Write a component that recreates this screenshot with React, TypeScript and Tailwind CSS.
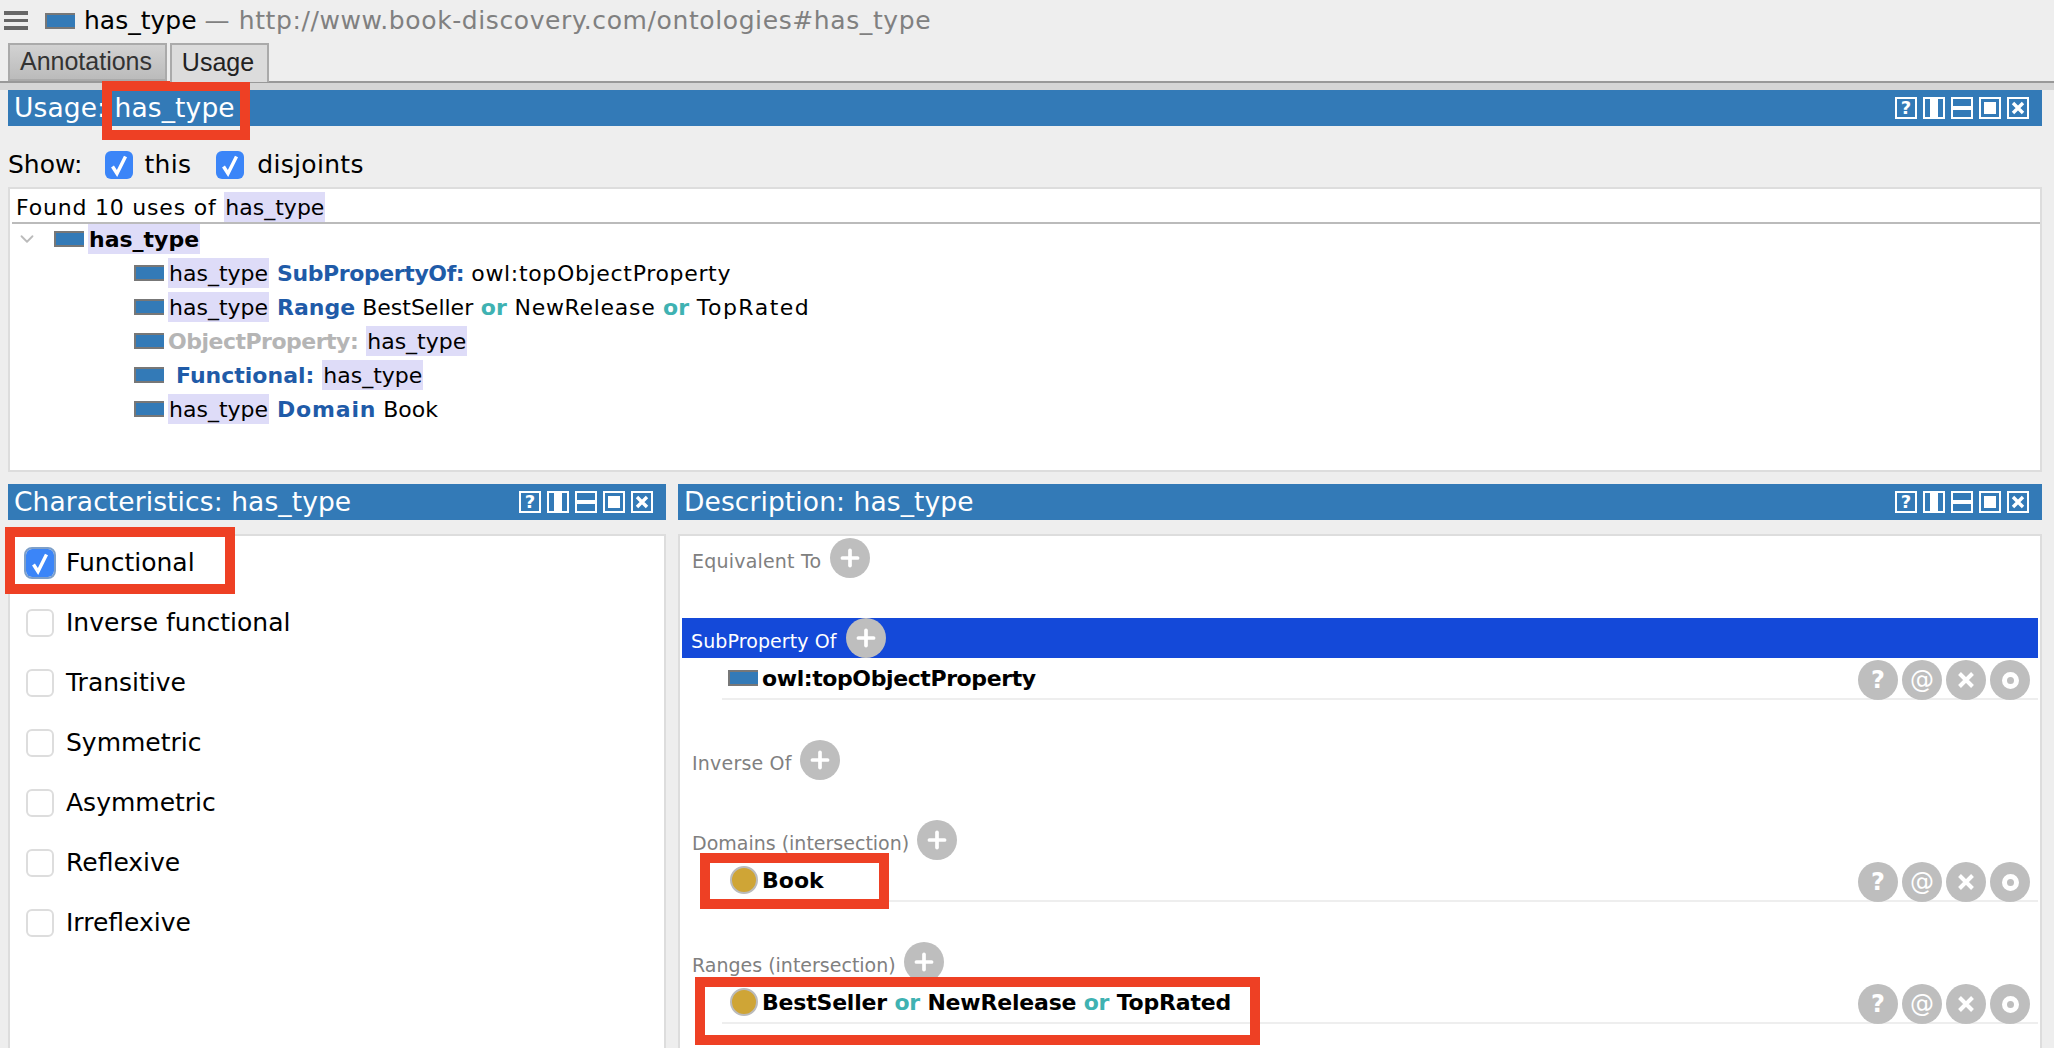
import { ChevronDown, Plus } from "lucide-react";
import type { ReactNode } from "react";

const sans = "font-['DejaVu_Sans',sans-serif]";

// the property glyph used all over the page
const PropIcon = ({ className = "" }: { className?: string }) => (
  <span className={`inline-block h-4 w-[30px] shrink-0 border-y-2 border-l-2 border-[#777] bg-[#337ab7] ${className}`} />
);

const ClassDot = () => (
  <span className="inline-block h-7 w-7 shrink-0 rounded-full border-2 border-[#bbb] bg-[#cfa536]" />
);

const Name = ({ children, bold = false }: { children: ReactNode; bold?: boolean }) => (
  <span className={`inline-flex h-[30px] items-center bg-[#dedcf8] px-[1px] text-black ${bold ? "font-bold" : ""}`}>{children}</span>
);

const Kw = ({ children, className = "" }: { children: ReactNode; className?: string }) => (
  <span className={`font-bold text-[#1f5ba8] ${className}`}>{children}</span>
);
const Or = ({ bold = true }: { bold?: boolean }) => <span className={`text-[#3fb2b2] ${bold ? "font-bold" : ""}`}> or </span>;

const HeaderButtons = () => (
  <div className="flex gap-[6px]">
    <span className="flex h-[22px] w-[22px] items-center justify-center border-2 border-white text-[18px] leading-none font-bold text-white">?</span>
    <span className="flex h-[22px] w-[22px] justify-center border-2 border-white"><span className="h-full w-2 bg-white" /></span>
    <span className="flex h-[22px] w-[22px] items-center border-2 border-white"><span className="h-1 w-full bg-white" /></span>
    <span className="flex h-[22px] w-[22px] items-center justify-center border-2 border-white"><span className="h-3 w-3 bg-white" /></span>
    <span className="flex h-[22px] w-[22px] items-center justify-center border-2 border-white">
      <svg width="14" height="14" viewBox="0 0 14 14"><path d="M2 2l10 10M12 2L2 12" stroke="#fff" strokeWidth="3.4" /></svg>
    </span>
  </div>
);

const ViewHeader = ({ title }: { title: string }) => (
  <div className="flex h-9 items-center justify-between bg-[#337ab7] pr-[13px] pl-[6px]">
    <span className="text-[26.5px] tracking-[0.1px] whitespace-nowrap text-white">{title}</span>
    <HeaderButtons />
  </div>
);

const CheckOn = ({ ring = false }: { ring?: boolean }) => (
  <span className={`flex h-7 w-7 shrink-0 items-center justify-center rounded-[6px] bg-[#3b85f8] ${ring ? "outline-2 outline-[#7d9fc9]" : ""}`}>
    <svg width="20" height="24" viewBox="0 0 20 24" fill="none">
      <path d="M3.500 13.500L8 20.500L16.500 3.500" stroke="#fff" strokeWidth="3.400" />
    </svg>
  </span>
);

const AddButton = () => (
  <span className="flex h-10 w-10 shrink-0 items-center justify-center rounded-full bg-[#bebebe]">
    <Plus size={26} strokeWidth={3.4} className="text-white" />
  </span>
);

const Circle = ({ children }: { children: ReactNode }) => (
  <span className="flex h-10 w-10 items-center justify-center rounded-full bg-[#bebebe] text-[24px] leading-none text-white">{children}</span>
);

const RowActions = () => (
  <div className="flex gap-1">
    <Circle><span className="font-bold">?</span></Circle>
    <Circle>@</Circle>
    <Circle>
      <svg width="18" height="18" viewBox="0 0 18 18"><path d="M2.500 2.500l13 13M15.500 2.500l-13 13" stroke="#fff" strokeWidth="4" /></svg>
    </Circle>
    <Circle><span className="h-[17px] w-[17px] rounded-full border-[5px] border-white" /></Circle>
  </div>
);

const FrameRow = ({ children }: { children: ReactNode }) => (
  <div className="ml-[40px] flex h-[42px] justify-between border-b-2 border-[#eee]">
    <div className="flex items-center gap-1 pl-2 text-[22px] font-bold text-black">{children}</div>
    <div className="-mb-[2px] self-end pr-2"><RowActions /></div>
  </div>
);

const SectionLabel = ({ children, className = "" }: { children: ReactNode; className?: string }) => (
  <div className={`flex h-10 items-center pl-[10px] text-[19px] whitespace-nowrap text-[#808080] ${className}`}>
    <span className="pt-[6px]">{children}</span>
    <AddButton />
  </div>
);

const characteristics = ["Inverse functional", "Transitive", "Symmetric", "Asymmetric", "Reflexive", "Irreflexive"];

const Callout = ({ className }: { className: string }) => (
  <div className={`absolute border-[10px] border-[#ee4024] ${className}`} />
);

export default function App() {
  return (
    <div className={`relative h-[1048px] w-[2054px] overflow-hidden bg-[#eeeeee] text-black ${sans}`}>
      {/* Title */}
      <div className="flex h-[43px] items-center pb-[2px] pl-1 text-[25px] whitespace-nowrap">
        <span className="flex h-[19px] w-6 flex-col justify-between">
          <span className="h-1 bg-[#666]" />
          <span className="h-[3px] bg-[#666]" />
          <span className="h-1 bg-[#666]" />
        </span>
        <PropIcon className="ml-[17px]" />
        <span className="ml-[9px]">has_type</span>
        <span className="ml-[8px] tracking-[0.6px] text-[#808080]">— http://www.book-discovery.com/ontologies#has_type</span>
      </div>

      {/* Tabs */}
      <div className="flex h-[38px] gap-[3px] pl-2 font-['Liberation_Sans',sans-serif] text-[25px]">
        <div className="flex w-[159px] items-center justify-center border-2 border-[#aaa] bg-gradient-to-b from-[#d2d2d2] to-[#bbbbbb] pr-[3px] text-[#333]">Annotations</div>
        <div className="z-10 flex h-[39px] w-[99px] items-center justify-center border-x-2 border-t-2 border-[#aaa] bg-[#dcdcdc] pr-[3px] pb-[2px] text-[#222]">Usage</div>
      </div>
      <div className="h-[9px] border-t-2 border-[#999] bg-[#d6d6d6]" />

      <div className="pr-3 pl-2">
        {/* Usage view */}
        <ViewHeader title="Usage: has_type" />
        <div className="flex h-[61px] items-center pt-4 text-[25px]">
          <span>Show:</span>
          <span className="ml-[22px]"><CheckOn /></span>
          <span className="ml-[12px] tracking-[0.3px]">this</span>
          <span className="ml-[25px]"><CheckOn /></span>
          <span className="ml-[13px] tracking-[0.3px]">disjoints</span>
        </div>
        <div className="h-[285px] border-2 border-[#ddd] bg-white text-[22px] whitespace-nowrap">
          <div className="ml-[2px] flex h-[35px] items-end border-b-2 border-[#bbb] pl-1">
            <span className="flex h-[30px] items-center tracking-[0.8px]">Found 10 uses of&nbsp;</span>
            <Name>has_type</Name>
          </div>
          <div className="flex h-[30px] items-center">
            <ChevronDown size={22} className="ml-[6px] text-[#bbb]" />
            <PropIcon className="ml-[16px]" />
            <span className="ml-1"><Name bold>has_type</Name></span>
          </div>
          <div className="mt-1 flex flex-col gap-1 pl-[124px]">
            <div className="flex h-[30px] items-center">
              <PropIcon className="mr-1" />
              <Name>has_type</Name>
              <span className="ml-2">
                <Kw className="tracking-[-0.4px]">SubPropertyOf:</Kw> <span className="tracking-[0.67px]">owl:topObjectProperty</span>
              </span>
            </div>
            <div className="flex h-[30px] items-center">
              <PropIcon className="mr-1" />
              <Name>has_type</Name>
              <span className="ml-2 whitespace-pre">
                <Kw>Range</Kw> BestSeller<Or /><span className="tracking-[0.7px]">NewRelease</span><Or /><span className="tracking-[1.5px]">TopRated</span>
              </span>
            </div>
            <div className="flex h-[30px] items-center">
              <PropIcon className="mr-1" />
              <span className="font-bold tracking-[-0.5px] text-[#b5b5b5]">ObjectProperty:</span>
              <span className="ml-2"><Name>has_type</Name></span>
            </div>
            <div className="flex h-[30px] items-center">
              <PropIcon className="mr-[12px]" />
              <Kw>Functional:</Kw>
              <span className="ml-2"><Name>has_type</Name></span>
            </div>
            <div className="flex h-[30px] items-center">
              <PropIcon className="mr-1" />
              <Name>has_type</Name>
              <span className="ml-2"><Kw className="tracking-[0.8px]">Domain</Kw> Book</span>
            </div>
          </div>
        </div>

        {/* Lower views */}
        <div className="mt-3 grid grid-cols-[658px_1fr] gap-3">
          <div>
            <ViewHeader title="Characteristics: has_type" />
            <div className="mt-[14px] h-[520px] border-2 border-[#ddd] bg-white pt-3 pl-[16px] text-[25px]">
              <div className="flex h-[30px] items-center gap-3">
                <CheckOn ring />
                <span>Functional</span>
              </div>
              {characteristics.map((name) => (
                <div key={name} className="mt-[30px] flex h-[30px] items-center gap-3">
                  <span className="h-7 w-7 shrink-0 rounded-[6px] border-2 border-[#ddd] bg-white" />
                  <span>{name}</span>
                </div>
              ))}
            </div>
          </div>

          <div>
            <ViewHeader title="Description: has_type" />
            <div className="mt-[14px] h-[520px] border-2 border-[#ddd] bg-white px-[2px]">
              <div className="pt-[2px]"><SectionLabel className="gap-[9px] tracking-[0.2px]">Equivalent To</SectionLabel></div>
              <div className="mt-10 bg-[#1449d9]">
                <div className="flex h-10 items-center gap-[9px] pl-[9px] text-[19px] tracking-[0.1px] text-white">
                  <span className="pt-[6px]">SubProperty Of</span>
                  <AddButton />
                </div>
              </div>
              <FrameRow><PropIcon className="-ml-[2px]" /><span className="tracking-[-0.4px]">owl:topObjectProperty</span></FrameRow>
              <div className="mt-10"><SectionLabel className="gap-2 tracking-[0.2px]">Inverse Of</SectionLabel></div>
              <div className="mt-10"><SectionLabel className="gap-2">Domains (intersection)</SectionLabel></div>
              <FrameRow><ClassDot /><span>Book</span></FrameRow>
              <div className="mt-10"><SectionLabel className="gap-2">Ranges (intersection)</SectionLabel></div>
              <FrameRow><ClassDot /><span className="tracking-[-0.2px] whitespace-pre">BestSeller<Or />NewRelease<Or />TopRated</span></FrameRow>
            </div>
          </div>
        </div>
      </div>

      {/* Red callouts drawn over the screenshot */}
      <Callout className="top-[81px] left-[102px] h-[59px] w-[148px]" />
      <Callout className="top-[527px] left-[5px] h-[67px] w-[230px]" />
      <Callout className="top-[853px] left-[700px] h-[56px] w-[189px]" />
      <Callout className="top-[977px] left-[695px] h-[68px] w-[565px]" />
    </div>
  );
}
